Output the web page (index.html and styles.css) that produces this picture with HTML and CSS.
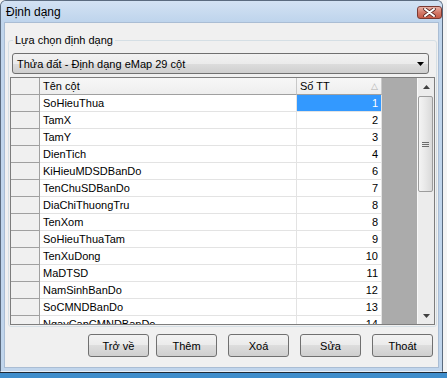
FILE: index.html
```html
<!DOCTYPE html>
<html lang="vi">
<head>
<meta charset="utf-8">
<title>Định dạng</title>
<link rel="stylesheet" href="styles.css">
</head>
<body>
<div class="screen">
  <div class="window">
    <div class="titlebar">
      <span class="title">Định dạng</span>
      <div class="close">
        <svg width="13" height="9" viewBox="0 0 13 9"><path d="M2 1 L11 8 M11 1 L2 8" stroke="#5a2a26" stroke-width="3.6" stroke-linecap="round"/><path d="M2 1 L11 8 M11 1 L2 8" stroke="#fff" stroke-width="2" stroke-linecap="round"/></svg>
      </div>
    </div>
    <div class="client">
      <fieldset class="group">
        <legend>Lựa chọn định dạng</legend>
        <div class="combo">
          <span>Thửa đất - Định dạng eMap 29 cột</span>
          <svg class="combo-arrow" width="7" height="4" viewBox="0 0 7 4"><path d="M0 0 H7 L3.5 4 Z" fill="#000"/></svg>
        </div>
        <div class="grid">
          <div class="table">
            <div class="row head">
              <div class="rh"></div>
              <div class="c name">Tên cột</div>
              <div class="c num-h"><span>Số TT</span><span class="sort">△</span></div>
              <div class="fill"></div>
            </div>
            <div class="row"><div class="rh"></div><div class="c name">SoHieuThua</div><div class="c num sel">1</div><div class="fill"></div></div>
            <div class="row"><div class="rh"></div><div class="c name">TamX</div><div class="c num">2</div><div class="fill"></div></div>
            <div class="row"><div class="rh"></div><div class="c name">TamY</div><div class="c num">3</div><div class="fill"></div></div>
            <div class="row"><div class="rh"></div><div class="c name">DienTich</div><div class="c num">4</div><div class="fill"></div></div>
            <div class="row"><div class="rh"></div><div class="c name">KiHieuMDSDBanDo</div><div class="c num">6</div><div class="fill"></div></div>
            <div class="row"><div class="rh"></div><div class="c name">TenChuSDBanDo</div><div class="c num">7</div><div class="fill"></div></div>
            <div class="row"><div class="rh"></div><div class="c name">DiaChiThuongTru</div><div class="c num">8</div><div class="fill"></div></div>
            <div class="row"><div class="rh"></div><div class="c name">TenXom</div><div class="c num">8</div><div class="fill"></div></div>
            <div class="row"><div class="rh"></div><div class="c name">SoHieuThuaTam</div><div class="c num">9</div><div class="fill"></div></div>
            <div class="row"><div class="rh"></div><div class="c name">TenXuDong</div><div class="c num">10</div><div class="fill"></div></div>
            <div class="row"><div class="rh"></div><div class="c name">MaDTSD</div><div class="c num">11</div><div class="fill"></div></div>
            <div class="row"><div class="rh"></div><div class="c name">NamSinhBanDo</div><div class="c num">12</div><div class="fill"></div></div>
            <div class="row"><div class="rh"></div><div class="c name">SoCMNDBanDo</div><div class="c num">13</div><div class="fill"></div></div>
            <div class="row"><div class="rh"></div><div class="c name">NgayCapCMNDBanDo</div><div class="c num">14</div><div class="fill"></div></div>
          </div>
          <div class="vscroll">
            <div class="sb-btn"><svg width="7" height="4" viewBox="0 0 7 4"><path d="M0 4 H7 L3.5 0 Z" fill="#404040"/></svg></div>
            <div class="sb-track">
              <div class="thumb">
                <svg width="7" height="5" viewBox="0 0 7 5"><path d="M0 0.5 H7 M0 2.5 H7 M0 4.5 H7" stroke="#6d6d6d" stroke-width="1"/></svg>
              </div>
            </div>
            <div class="sb-btn"><svg width="7" height="4" viewBox="0 0 7 4"><path d="M0 0 H7 L3.5 4 Z" fill="#404040"/></svg></div>
          </div>
        </div>
      </fieldset>
      <div class="buttons">
        <div class="btn btn-back">Trở về</div>
        <div class="btn">Thêm</div>
        <div class="btn">Xoá</div>
        <div class="btn">Sửa</div>
        <div class="btn">Thoát</div>
      </div>
    </div>
  </div>
  <div class="strip"></div>
</div>
</body>
</html>
```

FILE: styles.css
```css
html, body {
  margin: 0;
  padding: 0;
}
body {
  width: 447px;
  height: 378px;
  overflow: hidden;
  background: #f4f4f4;
  font-family: "Liberation Sans", Arial, sans-serif;
  font-size: 11px;
  color: #000;
}
.screen {
  width: 447px;
  height: 378px;
  display: flex;
  flex-direction: column;
}
.window {
  width: 443px;
  height: 372px;
  box-sizing: border-box;
  border: 1px solid #5b6b7f;
  border-bottom-color: #e6eef7;
  border-radius: 6px 6px 0 0;
  background: #c0d5ec;
  display: flex;
  flex-direction: column;
}
.titlebar {
  height: 21px;
  flex: none;
  display: flex;
  align-items: center;
  justify-content: space-between;
  padding-left: 5px;
  border-radius: 5px 5px 0 0;
  background: linear-gradient(#d3e2f3, #bed4ec);
}
.title {
  font-size: 12px;
  padding-top: 1px;
}
.close {
  width: 25px;
  height: 13px;
  box-sizing: border-box;
  margin-right: 0;
  margin-top: 2px;
  border: 1px solid #7a3a33;
  border-radius: 3px;
  background: linear-gradient(#e8b0a4, #d47a6a 50%, #c55a46);
  display: flex;
  align-items: center;
  justify-content: center;
}
.client {
  flex: 1;
  margin: 0 3px 3px;
  background: #f0f0f0;
  border: 1px solid #aabdd4;
  display: flex;
  flex-direction: column;
}
.group {
  margin: 11px 1px 0 3px;
  padding: 0 1px 1px 1px;
  border: 1px solid #d5dfe5;
  border-radius: 3px;
  min-width: 0;
}
.group legend {
  font-size: 11px;
  line-height: 13px;
  padding: 0 2px;
  margin-left: 3px;
}
.combo {
  height: 21px;
  box-sizing: border-box;
  margin: 6px 6px 0 2px;
  border: 1px solid #707070;
  border-radius: 3px;
  background: linear-gradient(#f2f2f2, #ebebeb 50%, #dddddd 50%, #cfcfcf);
  display: flex;
  align-items: center;
  justify-content: space-between;
  padding: 0 4px 0 4px;
}
.combo-arrow {
  margin-right: 0;
}
.grid {
  margin-top: 3px;
  height: 248px;
  box-sizing: border-box;
  border: 1px solid #7d7d7d;
  display: flex;
  background: #ababab;
}
.table {
  flex: 1;
  overflow: hidden;
}
.row {
  display: grid;
  grid-template-columns: 29px 257px 85px 1fr;
  height: 17px;
}
.rh {
  background: #f0f0f0;
  border-right: 1px solid #a0a0a0;
  border-bottom: 1px solid #a0a0a0;
}
.c {
  background: #fff;
  border-right: 1px solid #e3e3e3;
  border-bottom: 1px solid #e3e3e3;
  line-height: 16px;
  white-space: nowrap;
  overflow: hidden;
}
.name {
  padding-left: 3px;
}
.num {
  text-align: right;
  padding-right: 3px;
}
.sel {
  background: #3399ff;
  color: #fff;
}
.fill {
  background: #ababab;
}
.head .rh {
  border-bottom-color: #a0a0a0;
}
.head .c {
  background: linear-gradient(#f7f7f7, #eeeeee);
  border-right: 1px solid #c8c8c8;
  border-bottom: 1px solid #a0a0a0;
}
.num-h {
  display: flex;
  justify-content: space-between;
  padding: 0 3px 0 3px;
}
.sort {
  color: #b0b0b0;
  font-size: 9px;
}
.vscroll {
  width: 17px;
  flex: none;
  box-sizing: border-box;
  border-left: 1px solid #f8f8f8;
  background: #ececec;
  display: flex;
  flex-direction: column;
}
.sb-btn {
  height: 17px;
  flex: none;
  display: flex;
  align-items: center;
  justify-content: center;
}
.sb-track {
  flex: 1;
  padding: 1px 0 0 0;
}
.thumb {
  height: 96px;
  box-sizing: border-box;
  margin: 0 1px 0 0;
  border: 1px solid #9c9c9c;
  border-radius: 2px;
  background: linear-gradient(90deg, #f4f4f4, #e8e8e8 50%, #d9d9d9);
  display: flex;
  align-items: center;
  justify-content: center;
}
.buttons {
  margin-top: 7px;
  padding-right: 5px;
  display: flex;
  justify-content: flex-end;
  gap: 11px;
}
.btn {
  width: 61px;
  height: 23px;
  box-sizing: border-box;
  border: 1px solid #707070;
  border-radius: 3px;
  background: linear-gradient(#f2f2f2, #ebebeb 50%, #dddddd 50%, #cfcfcf);
  display: flex;
  align-items: center;
  justify-content: center;
}
.btn-back {
  margin-right: -4px;
}
.strip {
  flex: 1;
  border-top: 1px solid #1f2a36;
  background: #3f8dcb;
}
```
